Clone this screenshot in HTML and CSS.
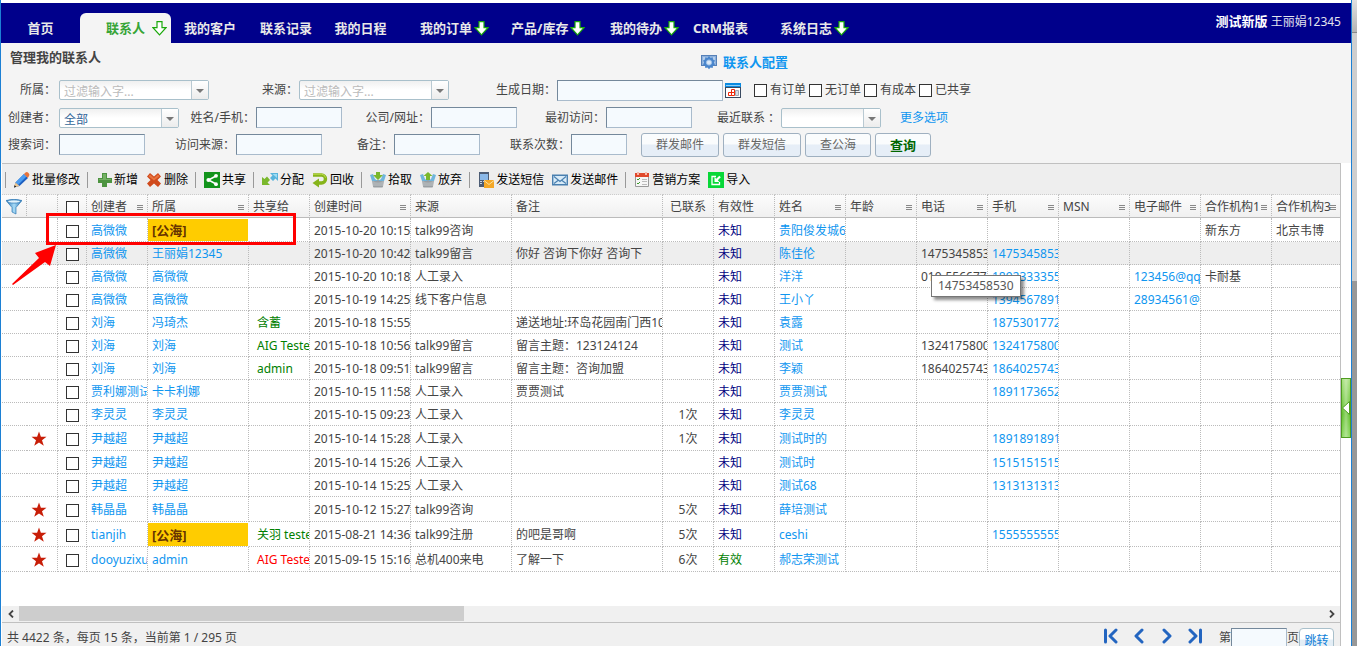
FILE: index.html
```html
<!DOCTYPE html>
<html lang="zh-CN">
<head>
<meta charset="utf-8">
<title>管理我的联系人</title>
<link rel="stylesheet" href="styles.css">
</head>
<body>
<svg class="defs" aria-hidden="true">
  <defs>
    <linearGradient id="skyGrad" x1="0" y1="0" x2="1" y2="0"><stop offset="0" stop-color="#1f6cb0"/><stop offset=".5" stop-color="#a9dcf7"/><stop offset="1" stop-color="#2473b5"/></linearGradient>
  </defs>
  <symbol id="i-down" viewBox="0 0 15 15"><path d="M5 .7h5v6h4L7.500 13.800 1 6.700h4z" fill="#fff" stroke="#1aa80a" stroke-width="1.200"/></symbol>
  <symbol id="i-star" viewBox="0 0 16 16"><path d="M8 .5l1.900 5.300h5.600l-4.500 3.400 1.800 5.600L8 11.400l-4.800 3.400L5 9.200.5 5.800h5.600z" fill="#c81e08"/></symbol>
  <symbol id="i-basket" viewBox="0 0 16 16"><path d="M2 8h12l-1 6.500q0 1-1 1H4q-1 0-1-1z" fill="#9a9fa3"/><path d="M0 3l3-1 2 5 3 2 3-2 2-5 3 1-2 6H2z" fill="#6fb5dc"/><path d="M3 9q5 3 10 0v5H3z" fill="#aeb3b6"/></symbol>
</svg>
<div class="app">
  <nav class="nav">
    <a class="tab" href="#">首页</a>
    <a class="tab menu active" href="#">联系人<svg><use href="#i-down"/></svg></a>
    <a class="tab" href="#">我的客户</a>
    <a class="tab" href="#">联系记录</a>
    <a class="tab" href="#">我的日程</a>
    <a class="tab menu" href="#">我的订单<svg><use href="#i-down"/></svg></a>
    <a class="tab menu" href="#">产品/库存<svg><use href="#i-down"/></svg></a>
    <a class="tab menu" href="#">我的待办<svg><use href="#i-down"/></svg></a>
    <a class="tab" href="#">CRM报表</a>
    <a class="tab menu" href="#">系统日志<svg><use href="#i-down"/></svg></a>
    <div class="user"><b>测试新版</b> 王丽娟12345</div>
  </nav>

  <form class="filters">
    <div class="heading">
      <h1>管理我的联系人</h1>
      <a class="config" href="#"><svg viewBox="0 0 16 16"><rect x=".5" y="1.500" width="15" height="10" fill="#8fb2dc" stroke="#5580b8"/><path d="M2 3h12v7H2z" fill="#b4cdeb"/><path d="M8 2l1.500 1.700 2.200-.4.300 2.200 2 1.100-1 2 1 2-2 1.100-.3 2.200-2.200-.4L8 15.200l-1.500-1.700-2.200.4-.3-2.200-2-1.100 1-2-1-2 2-1.100.3-2.200 2.200.4z" fill="#4a86cc"/><circle cx="8" cy="8.500" r="2.600" fill="#dce9f7" stroke="#9cc0e8"/></svg>联系人配置</a>
    </div>
    <div class="row row-a">
      <label for="owner">所属：</label><span class="combo hint"><select id="owner"><option>过滤输入字...</option></select></span>
      <label for="source">来源：</label><span class="combo hint"><select id="source"><option>过滤输入字...</option></select></span>
      <label for="date">生成日期：</label><input class="text" id="date" type="text">
      <div class="checks">
        <svg class="cal" viewBox="0 0 16 16"><path d="M0 1h16v15H0z" fill="#3a4a60"/><path d="M0 1h16v4H0z" fill="#0a8ae0"/><path d="M1 3h14v1H1z" fill="#8fd0f8"/><path d="M1 6h14v9H1z" fill="#fff"/><path d="M3.500 10.500h3v3h-3zM6.500 7.500h3v3h-3zM6.500 10.500h3v3h-3z" fill="#fff" stroke="#f02808"/><path d="M10.500 8.500h3v5h-3z" fill="#d8dde4" stroke="#a0a8b4"/></svg>
        <label><input type="checkbox">有订单</label><label><input type="checkbox">无订单</label><label><input type="checkbox">有成本</label><label><input type="checkbox">已共享</label>
      </div>
    </div>
    <div class="row row-b">
      <label for="creator">创建者：</label><span class="combo"><select id="creator"><option>全部</option></select></span>
      <label for="name">姓名/手机：</label><input class="text" id="name" type="text">
      <label for="company">公司/网址：</label><input class="text" id="company" type="text">
      <label for="first">最初访问：</label><input class="text" id="first" type="text">
      <label for="recent">最近联系 ：</label><span class="combo"><select id="recent"><option></option></select></span>
      <a class="more" href="#">更多选项</a>
    </div>
    <div class="row row-c">
      <label for="keyword">搜索词：</label><input class="text" id="keyword" type="text">
      <label for="visit">访问来源：</label><input class="text" id="visit" type="text">
      <label for="remark">备注：</label><input class="text" id="remark" type="text">
      <label for="times">联系次数：</label><input class="text" id="times" type="text">
      <div class="buttons">
        <button class="btn wide" type="button">群发邮件</button><button class="btn wide" type="button">群发短信</button><button class="btn mid" type="button">查公海</button><button class="btn query" type="button">查询</button>
      </div>
    </div>
  </form>

  <main class="shell">
  <section class="grid">
    <div class="toolbar">
      <div class="group">
        <button type="button"><svg viewBox="0 0 16 16"><path d="M0 15.500l1.500-5L10 2l4 4-8.500 8z" fill="#1d5fc0"/><path d="M1.500 10.500L10 2l2.500 2.500-8.500 8.500z" fill="#4a9cf0"/><path d="M10 2l1.500-1.500q1.500-1 3 .5t.5 3L13.800 6z" fill="#e8743a"/><path d="M0 15.500l1.500-5 4 3.500z" fill="#f0c890"/><path d="M0 15.500l.7-2.200 1.600 1.400z" fill="#111"/></svg>批量修改</button>
      </div>
      <div class="group">
        <button type="button"><svg viewBox="0 0 16 16"><path d="M6 1h5v5h5v5h-5v4H6v-4H2V6h4z" fill="#4d9440"/><path d="M7 2h3v5h5v1H3V7h4z" fill="#74b064"/></svg>新增</button>
        <button type="button"><svg viewBox="0 0 16 16"><path d="M4 1l4 3.500L12 1l3 3.500L11.500 8l3.500 3.500L12 15l-4-3.500L4 15l-3-3.500L4.500 8 1 4.500z" fill="#d04a1c"/><path d="M4 2.500L8 6l4-3.500 1.500 1.800L8 8.500 2.500 4.300z" fill="#e8743e"/></svg>删除</button>
      </div>
      <div class="group">
        <button type="button"><svg viewBox="0 0 16 16"><path d="M0 0h16v16H0z" fill="#12941c"/><path d="M12 4L4.500 8l7.500 4" stroke="#fff" stroke-width="1.500" fill="none"/><circle cx="12" cy="3.800" r="1.900" fill="#fff"/><circle cx="12" cy="12.200" r="1.900" fill="#fff"/><circle cx="4.500" cy="8" r="2.100" fill="#fff"/></svg>共享</button>
      </div>
      <div class="group">
        <button type="button"><svg viewBox="0 0 16 16"><path d="M0 5l2.500 2L5 4.500 8 8l-2.500 2.500L8 13H0z" fill="#7ab82c"/><path d="M8 1h8v8l-2.500-2.500L11 9 8 6l2.500-2.500z" fill="#58b4dc"/><path d="M10.500 2H15v4z" fill="#9cdcf4"/></svg>分配</button>
        <button type="button"><svg viewBox="0 0 16 16"><path d="M1 3h8.500a4 4 0 0 1 0 8H6" fill="none" stroke="#86b41a" stroke-width="3.400"/><path d="M7 6.500v9L.5 11z" fill="#86b41a"/><path d="M1 2.200h8.500q3.500.3 4 3.500" fill="none" stroke="#c0dc50"/></svg>回收</button>
      </div>
      <div class="group">
        <button type="button"><svg viewBox="0 0 16 16"><use href="#i-basket"/><path d="M6 0h4v3h3L8 8 3 3h3z" fill="#7ab82c"/></svg>拾取</button>
        <button type="button"><svg viewBox="0 0 16 16"><use href="#i-basket"/><path d="M8 0l4.500 4H10v4H6V4H3.500z" fill="#7ab82c"/></svg>放弃</button>
      </div>
      <div class="group">
        <button type="button"><svg viewBox="0 0 16 16"><path d="M1 0h10v15H1z" fill="#4c5c74"/><path d="M2 2h8v6H2z" fill="#8ab8e8"/><path d="M2 9h2v1H2zm3 0h2v1H5zm-3 2h2v1H2z" fill="#c8d4e4"/><path d="M6 8h10v8H6z" fill="#f4a828"/><path d="M6 8.500l5 4 5-4" fill="none" stroke="#fbe0a0"/></svg>发送短信</button>
        <button type="button"><svg viewBox="0 0 16 16"><path d="M.7 3.200h14.600v9.600H.7z" fill="#d8ebf8" stroke="#4a80b0" stroke-width="1.400"/><path d="M2 4.500l6 5 6-5M2 11.500l4-3M14 11.500l-4-3" fill="none" stroke="#4a80b0" stroke-width="1.200"/></svg>发送邮件</button>
      </div>
      <div class="group">
        <button type="button"><svg viewBox="0 0 16 16"><path d="M1.500 2.500h13v12h-13z" fill="#f6f6f6" stroke="#999"/><path d="M1 1h14v4H1z" fill="#e0492c"/><path d="M3 0h2v3H3zM11 0h2v3h-2z" fill="#f8b8a8"/><path d="M3 7l1 1 2-2M3 11l1 1 2-2" fill="none" stroke="#3a9a2a"/><path d="M8 7.500h5M8 9.500h5M8 12.500h5" stroke="#bbb"/></svg>营销方案</button>
        <button type="button"><svg viewBox="0 0 16 16"><path d="M0 0h16v16H0z" fill="#08d838"/><path d="M8 4.500H4v8h7.500V10" fill="none" stroke="#fff" stroke-width="1.300"/><path d="M6.500 5v5h5L9.800 8.300l3-3-1.500-1.500-3 3z" fill="#fff"/></svg>导入</button>
      </div>
    </div>

    <div class="table-area">
    <table class="data">
      <colgroup><col class="w25"><col class="w31"><col class="w29"><col class="w61"><col class="w101"><col class="w61"><col class="w101"><col class="w101"><col class="w151"><col class="w51"><col class="w61"><col class="w71"><col class="w71"><col class="w71"><col class="w71"><col class="w71"><col class="w71"><col class="w71"><col></colgroup>
      <thead><tr>
        <th><svg class="funnel" viewBox="0 0 16 16"><path d="M0 1.500Q8-1 16 1.500L10 8.500V15l-4-2V8.500z" fill="url(#skyGrad)" stroke="#2f79b5" stroke-width=".7"/><ellipse cx="8" cy="2.500" rx="6.500" ry="1.600" fill="#e4f5fd" stroke="#2f79b5" stroke-width=".7"/></svg></th>
        <th></th><th class="c"><input type="checkbox" aria-label="全选"></th>
        <th class="m">创建者</th><th class="m">所属</th><th>共享给</th><th class="m">创建时间</th><th>来源</th><th>备注</th><th class="c">已联系</th><th>有效性</th><th class="m">姓名</th><th class="m">年龄</th><th class="m">电话</th><th class="m">手机</th><th class="m">MSN</th><th class="m">电子邮件</th><th class="m">合作机构1</th><th class="m">合作机构3</th>
      </tr></thead>
      <tbody>
        <tr><td></td><td></td><td class="c"><input type="checkbox" aria-label="选择"></td><td><a href="#">高微微</a></td><td class="pool">[公海]</td><td class="s"></td><td>2015-10-20 10:15</td><td>talk99咨询</td><td></td><td class="c"></td><td class="navy">未知</td><td><a href="#">贵阳俊发城6</a></td><td></td><td></td><td></td><td></td><td></td><td>新东方</td><td>北京韦博</td></tr>
        <tr class="hover"><td></td><td></td><td class="c"><input type="checkbox" aria-label="选择"></td><td><a href="#">高微微</a></td><td><a href="#">王丽娟12345</a></td><td class="s"></td><td>2015-10-20 10:42</td><td>talk99留言</td><td>你好 咨询下你好 咨询下</td><td class="c"></td><td class="navy">未知</td><td><a href="#">陈佳伦</a></td><td></td><td>1475345853</td><td><a href="#">1475345853</a></td><td></td><td></td><td></td><td></td></tr>
        <tr><td></td><td></td><td class="c"><input type="checkbox" aria-label="选择"></td><td><a href="#">高微微</a></td><td><a href="#">高微微</a></td><td class="s"></td><td>2015-10-20 10:18</td><td>人工录入</td><td></td><td class="c"></td><td class="navy">未知</td><td><a href="#">洋洋</a></td><td></td><td>010-556677</td><td><a href="#">1892333355</a></td><td></td><td><a href="#">123456@qq</a></td><td>卡耐基</td><td></td></tr>
        <tr><td></td><td></td><td class="c"><input type="checkbox" aria-label="选择"></td><td><a href="#">高微微</a></td><td><a href="#">高微微</a></td><td class="s"></td><td>2015-10-19 14:25</td><td>线下客户信息</td><td></td><td class="c"></td><td class="navy">未知</td><td><a href="#">王小丫</a></td><td></td><td></td><td><a href="#">1394567891</a></td><td></td><td><a href="#">28934561@</a></td><td></td><td></td></tr>
        <tr><td></td><td></td><td class="c"><input type="checkbox" aria-label="选择"></td><td><a href="#">刘海</a></td><td><a href="#">冯琦杰</a></td><td class="s green">含蓄</td><td>2015-10-18 15:55</td><td></td><td>递送地址:环岛花园南门西10</td><td class="c"></td><td class="navy">未知</td><td><a href="#">袁露</a></td><td></td><td></td><td><a href="#">1875301772</a></td><td></td><td></td><td></td><td></td></tr>
        <tr><td></td><td></td><td class="c"><input type="checkbox" aria-label="选择"></td><td><a href="#">刘海</a></td><td><a href="#">刘海</a></td><td class="s green">AIG Teste</td><td>2015-10-18 10:56</td><td>talk99留言</td><td>留言主题：123124124</td><td class="c"></td><td class="navy">未知</td><td><a href="#">测试</a></td><td></td><td>1324175800</td><td><a href="#">1324175800</a></td><td></td><td></td><td></td><td></td></tr>
        <tr><td></td><td></td><td class="c"><input type="checkbox" aria-label="选择"></td><td><a href="#">刘海</a></td><td><a href="#">刘海</a></td><td class="s green">admin</td><td>2015-10-18 09:51</td><td>talk99留言</td><td>留言主题：咨询加盟</td><td class="c"></td><td class="navy">未知</td><td><a href="#">李颖</a></td><td></td><td>1864025743</td><td><a href="#">1864025743</a></td><td></td><td></td><td></td><td></td></tr>
        <tr><td></td><td></td><td class="c"><input type="checkbox" aria-label="选择"></td><td><a href="#">贾利娜测试</a></td><td><a href="#">卡卡利娜</a></td><td class="s"></td><td>2015-10-15 11:58</td><td>人工录入</td><td>贾贾测试</td><td class="c"></td><td class="navy">未知</td><td><a href="#">贾贾测试</a></td><td></td><td></td><td><a href="#">1891173652</a></td><td></td><td></td><td></td><td></td></tr>
        <tr><td></td><td></td><td class="c"><input type="checkbox" aria-label="选择"></td><td><a href="#">李灵灵</a></td><td><a href="#">李灵灵</a></td><td class="s"></td><td>2015-10-15 09:23</td><td>人工录入</td><td></td><td class="c">1次</td><td class="navy">未知</td><td><a href="#">李灵灵</a></td><td></td><td></td><td></td><td></td><td></td><td></td><td></td></tr>
        <tr class="tall"><td></td><td><svg><use href="#i-star"/></svg></td><td class="c"><input type="checkbox" aria-label="选择"></td><td><a href="#">尹越超</a></td><td><a href="#">尹越超</a></td><td class="s"></td><td>2015-10-14 15:28</td><td>人工录入</td><td></td><td class="c">1次</td><td class="navy">未知</td><td><a href="#">测试时的</a></td><td></td><td></td><td><a href="#">1891891891</a></td><td></td><td></td><td></td><td></td></tr>
        <tr><td></td><td></td><td class="c"><input type="checkbox" aria-label="选择"></td><td><a href="#">尹越超</a></td><td><a href="#">尹越超</a></td><td class="s"></td><td>2015-10-14 15:26</td><td>人工录入</td><td></td><td class="c"></td><td class="navy">未知</td><td><a href="#">测试时</a></td><td></td><td></td><td><a href="#">1515151515</a></td><td></td><td></td><td></td><td></td></tr>
        <tr><td></td><td></td><td class="c"><input type="checkbox" aria-label="选择"></td><td><a href="#">尹越超</a></td><td><a href="#">尹越超</a></td><td class="s"></td><td>2015-10-14 15:25</td><td>人工录入</td><td></td><td class="c"></td><td class="navy">未知</td><td><a href="#">测试68</a></td><td></td><td></td><td><a href="#">1313131313</a></td><td></td><td></td><td></td><td></td></tr>
        <tr class="tall"><td></td><td><svg><use href="#i-star"/></svg></td><td class="c"><input type="checkbox" aria-label="选择"></td><td><a href="#">韩晶晶</a></td><td><a href="#">韩晶晶</a></td><td class="s"></td><td>2015-10-12 15:27</td><td>talk99咨询</td><td></td><td class="c">5次</td><td class="navy">未知</td><td><a href="#">薛培测试</a></td><td></td><td></td><td></td><td></td><td></td><td></td><td></td></tr>
        <tr class="tall"><td></td><td><svg><use href="#i-star"/></svg></td><td class="c"><input type="checkbox" aria-label="选择"></td><td><a href="#">tianjih</a></td><td class="pool">[公海]</td><td class="s green">关羽 teste</td><td>2015-08-21 14:36</td><td>talk99注册</td><td>的吧是哥啊</td><td class="c">5次</td><td class="navy">未知</td><td><a href="#">ceshi</a></td><td></td><td></td><td><a href="#">1555555555</a></td><td></td><td></td><td></td><td></td></tr>
        <tr class="tall"><td></td><td><svg><use href="#i-star"/></svg></td><td class="c"><input type="checkbox" aria-label="选择"></td><td><a href="#">dooyuzixu</a></td><td><a href="#">admin</a></td><td class="s red">AIG Teste</td><td>2015-09-15 15:16</td><td>总机400来电</td><td>了解一下</td><td class="c">6次</td><td class="green">有效</td><td><a href="#">郝志荣测试</a></td><td></td><td></td><td></td><td></td><td></td><td></td><td></td></tr>
      </tbody>
    </table>
    <div class="tooltip" role="tooltip">14753458530</div>
    <div class="mark"></div>
    <svg class="pointer" viewBox="0 0 46 42"><path d="M0 40L27 14l-4-5L44 1 38 22l-5-4L1 41z" fill="#f00"/></svg>
    </div>

    <div class="hscroll">
      <button type="button" aria-label="向左"><svg viewBox="0 0 8 8"><path d="M6 .5L2.500 4 6 7.500" fill="none" stroke="#444" stroke-width="1.800"/></svg></button>
      <div class="thumb"></div>
      <button type="button" aria-label="向右"><svg viewBox="0 0 8 8"><path d="M2 .5L5.500 4 2 7.500" fill="none" stroke="#444" stroke-width="1.800"/></svg></button>
    </div>
    <footer class="pager">
      <p>共 4422 条，每页 15 条，当前第 1 / 295 页</p>
      <div class="pages">
        <button type="button" aria-label="首页"><svg viewBox="0 0 16 16"><path d="M2.500 2v12M13 2L7 8l6 6" /></svg></button>
        <button type="button" aria-label="上一页"><svg viewBox="0 0 16 16"><path d="M11 2L5 8l6 6"/></svg></button>
        <button type="button" aria-label="下一页"><svg viewBox="0 0 16 16"><path d="M5 2l6 6-6 6"/></svg></button>
        <button type="button" aria-label="末页"><svg viewBox="0 0 16 16"><path d="M13.500 2v12M3 2l6 6-6 6"/></svg></button>
      </div>
      <label for="page">第</label><input class="text" id="page" type="text"><span>页</span><button class="jump" type="button">跳转</button>
    </footer>
  </section>
  <button class="handle" type="button" aria-label="展开侧栏"><svg viewBox="0 0 8 14"><path d="M7.500 .5v13L.5 7z" fill="#fff" stroke="#4f9d20"/></svg></button>
  </main>
</div>
<div class="vscroll"><div class="vtop"></div><div class="vtrack"></div><div class="vthumb"></div></div>
</body>
</html>
```
FILE: styles.css
```css
* { box-sizing: border-box; }

body {
  margin: 0;
  height: 100vh;
  display: flex;
  overflow: hidden;
  background: #fff;
  color: #444;
  font: 12px/16px "Noto Sans", "Noto Sans CJK SC", sans-serif;
}
a { color: #0f96f0; text-decoration: none; }
button, input, select { font: inherit; color: inherit; margin: 0; padding: 0; }
button { background: none; border: 0; }
svg { display: block; flex: none; width: 16px; height: 16px; }
.defs { position: absolute; width: 0; height: 0; }

.app {
  flex: 1;
  min-width: 0;
  display: flex;
  flex-direction: column;
  padding-top: 3px;
  border-left: 1px solid #1c80d4;
  border-right: 1px solid #1c80d4;
}

/* navigation */
.nav {
  display: grid;
  grid-template-columns: 79px 91px 78px 74px 75px 91px 99px 95px 75px 90px 1fr;
  height: 40px;
  padding: 10px 0 0;
  background: #00008b;
  font-size: 13px;
}
.tab {
  display: flex;
  align-items: center;
  justify-content: center;
  color: #e8e8e8;
  font-weight: bold;
  white-space: nowrap;
}
.tab.menu { justify-content: flex-start; padding-left: 22px; gap: 2px; }
.tab svg { width: 15px; height: 15px; }
.tab.active {
  padding-left: 26px;
  gap: 7px;
  border-radius: 6px 6px 0 0;
  background: #f4f4f4;
  color: #36a436;
}
.user { justify-self: end; padding-right: 10px; color: #e4e4ee; font-size: 12px; }
.user b { color: #fff; font-size: 13px; }

/* filters */
.filters { padding-bottom: 5px; background: #f4f4f4; }
.heading { display: grid; grid-template-columns: 691px auto; align-items: start; height: 33px; padding: 6px 0 0 9px; }
.heading h1 { margin: 0; font-size: 13px; line-height: 16px; }
.config { display: flex; align-items: center; gap: 6px; padding-top: 5px; font-size: 13px; font-weight: bold; line-height: 16px; }
.row { display: grid; align-items: center; height: 27px; }
.row-a { height: 28px; grid-template-columns: 58px 150px 90px 150px 108px 166px auto; }
.row-b { grid-template-columns: 58px 120px 77px 86px 89px 86px 89px 86px 89px 100px auto; }
.row-c { grid-template-columns: 58px 86px 91px 86px 72px 86px 91px 56px auto; }
.row > label { padding-right: 1px; text-align: right; white-space: nowrap; }
.row > label:first-child { padding-right: 3px; }
.text {
  width: 100%;
  height: 21px;
  border: 1px solid;
  border-color: #74889b #a9bbcc #a9bbcc #74889b;
  border-radius: 0;
  background: #f5fafe;
}
.combo { position: relative; }
.combo::before {
  content: "";
  position: absolute;
  top: 1px;
  right: 1px;
  width: 16px;
  height: 18px;
  border-left: 1px solid #b9c9d2;
  background: linear-gradient(#fff, #ececec);
  pointer-events: none;
}
.combo::after {
  content: "";
  position: absolute;
  top: 9px;
  right: 5px;
  border: 4px solid transparent;
  border-top-color: #777;
  border-bottom: 0;
  pointer-events: none;
}
.combo select {
  display: block;
  width: 100%;
  height: 20px;
  padding: 2px 18px 0 4px;
  appearance: none;
  border: 1px solid #a9c0cb;
  border-radius: 2px;
  background: linear-gradient(#f0f0f0, #fff 50%);
  color: #336699;
  line-height: 18px;
}
.combo.hint select { color: #bbb; }
input[type="checkbox"] {
  width: 13px;
  height: 13px;
  appearance: none;
  border: 1px solid #333;
  background: #fff;
  vertical-align: middle;
}
.checks { display: flex; align-items: center; padding-left: 2px; }
.cal { margin-right: 13px; }
.checks label { display: flex; align-items: center; gap: 3px; margin-right: 3px; }
.more { padding-left: 19px; }
.buttons { display: flex; gap: 4px; padding-left: 14px; }
.btn {
  height: 24px;
  border: 1px solid #9fb0c0;
  border-radius: 3px;
  background: linear-gradient(#fafcfd 45%, #e6eef7 50%);
  color: #666;
}
.wide { width: 78px; }
.mid { width: 66px; }
.query { width: 56px; color: #060; font-size: 13px; font-weight: bold; }

/* grid shell */
.shell { position: relative; flex: 1; min-height: 0; display: flex; padding: 0 10px 0 1px; }
.grid {
  flex: 1;
  min-width: 0;
  display: flex;
  flex-direction: column;
  border-top: 1px solid #c0c0c0;
  border-right: 1px solid #c0c0c0;
}
.toolbar { display: flex; align-items: center; height: 30px; padding: 2px 0 0 3px; background: #eee; color: #000; }
.group { display: flex; gap: 8px; padding: 0 7px 0 8px; border-left: 1px solid #999; }
.group button { display: flex; align-items: center; gap: 2px; white-space: nowrap; }

.table-area { position: relative; flex: 1; min-height: 0; }
.data { width: 100%; table-layout: fixed; border-collapse: separate; border-spacing: 0; }
.w25 { width: 25px; } .w29 { width: 29px; } .w31 { width: 31px; } .w51 { width: 51px; } .w61 { width: 61px; }
.w71 { width: 71px; } .w101 { width: 101px; } .w151 { width: 151px; }
.data th, .data td {
  height: 23px;
  padding: 2px 0 0 4px;
  overflow: hidden;
  border-right: 1px dotted #bbb;
  border-bottom: 1px dotted #bbb;
  text-align: left;
  font-weight: normal;
  white-space: nowrap;
}
.data th {
  height: 24px;
  border-top: 1px dotted #ccc;
  border-bottom: 1px solid #bbb;
  background: linear-gradient(#fcfcfc, #f0f0f0);
}
.data th.m {
  background:
    linear-gradient(#888, #888) right 4px top 10px / 6px 1px no-repeat,
    linear-gradient(#888, #888) right 4px top 12px / 6px 1px no-repeat,
    linear-gradient(#888, #888) right 4px top 14px / 6px 1px no-repeat,
    linear-gradient(#fcfcfc, #f0f0f0);
}
.data tr > :last-child { border-right: 0; }
.data td:first-child { border-right: 0; }
.data tbody tr:first-child td { height: 24px; }
.data .tall td { height: 25px; }
.data .c { padding: 2px 0 0; text-align: center; }
.data .s { padding-left: 8px; }
.data .hover td { background: #eee; }
.data .pool {
  padding-top: 0;
  border-top: 1px solid #fff;
  border-right: 1px solid #fff;
  border-bottom: 1px dotted #bbb;
  background: #fc0 padding-box;
  color: #630;
  font-size: 13px;
  font-weight: bold;
  line-height: 14px;
}
.navy { color: #000080; }
.green { color: #008000; }
.red { color: #f00; }

/* overlays on the table */
.tooltip {
  position: absolute;
  top: 81px;
  left: 929px;
  padding: 2px 6px;
  border: 1px solid #767676;
  background: #fff;
  box-shadow: 3px 3px 3px rgba(0, 0, 0, .45);
  color: #575757;
}
.mark { position: absolute; top: 19px; left: 44px; width: 250px; height: 32px; border: 3px solid #f00; }
.pointer { position: absolute; top: 50px; left: 10px; width: 46px; height: 42px; }

.hscroll { display: flex; height: 16px; flex: none; justify-content: space-between; background: #f0f0f0; }
.hscroll button { display: flex; align-items: center; justify-content: center; width: 17px; }
.hscroll svg { width: 8px; height: 8px; }
.thumb { width: 445px; height: 15px; margin-right: auto; background: #cdcdcd; }

.pager {
  display: flex;
  align-items: flex-start;
  flex: none;
  height: 24px;
  padding: 5px 6px 0 5px;
  border-top: 1px solid #c0c0c0;
  background: #f0f0f0;
}
.pager p { flex: 1; margin: 2px 0 0; }
.pager label, .pager span { margin-top: 2px; }
.pages { display: flex; gap: 12px; margin-right: 16px; }
.pages path { fill: none; stroke: #2365c0; stroke-width: 3; stroke-linecap: round; stroke-linejoin: round; }
.pager .text { width: 56px; }
.jump {
  width: 35px;
  height: 22px;
  padding-top: 3px;
  border: 1px solid #a9c0cb;
  border-radius: 4px;
  background: linear-gradient(#fff 50%, #e4eef6 55%);
  color: #0f7fd8;
}
.handle {
  position: absolute;
  top: 215px;
  right: 0;
  width: 10px;
  height: 60px;
  border: 1px solid #4f9d20;
  background: linear-gradient(90deg, rgba(255, 255, 255, 0), rgba(255, 255, 255, .35), rgba(255, 255, 255, 0)), linear-gradient(#a8e080, #62c02c 60%, #8cd860);
}
.handle svg { width: 8px; height: 14px; }

/* window scroll strip */
.vscroll { display: flex; flex-direction: column; width: 5px; }
.vtop { height: 33px; border-bottom: 1px solid #888; background: linear-gradient(#e0e0e0, #b4b4b4); }
.vtrack { height: 248px; background: #cecece; }
.vthumb { flex: 1; background: #989898; }
```
